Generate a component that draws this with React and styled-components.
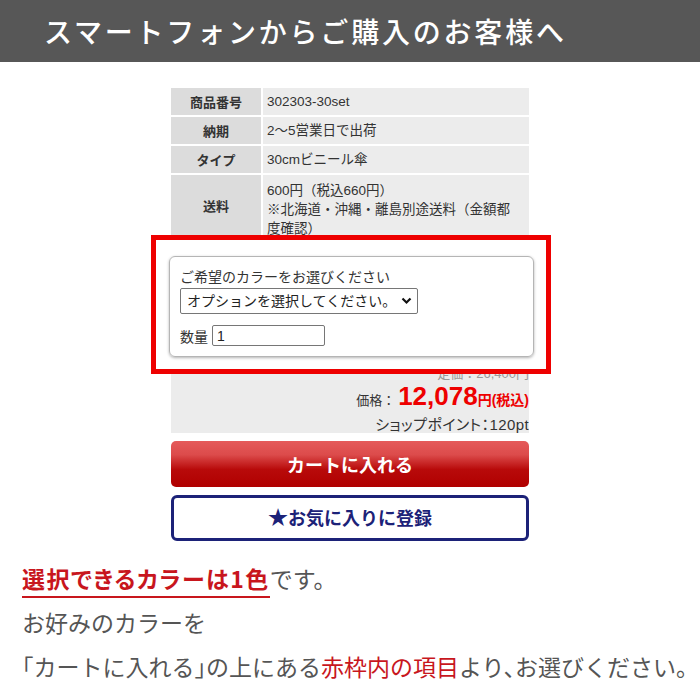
import React from "react"
import styled, { createGlobalStyle } from "styled-components"

const GlobalStyle = createGlobalStyle`
  body {
    margin: 0;
    background: #fff;
    font-family: "Liberation Sans", "Noto Sans CJK JP", sans-serif;
    color: #333;
  }
`

const Header = styled.header`
  height: 62px;
  background: #575757;
  display: flex;
  align-items: center;
  padding-left: 44px;
`

const Title = styled.h1`
  margin: 0;
  color: #fff;
  font-family: "Noto Sans CJK JP", sans-serif;
  font-weight: 500;
  font-size: 28px;
  letter-spacing: 2.8px;
`

const Main = styled.main`
  width: 358px;
  margin: 26px auto 0;
`

const Table = styled.div`
  display: grid;
  grid-template-columns: 90px 1fr;
  gap: 2px;
`

const Row = styled.div`
  display: contents;
`

const Label = styled.div`
  background: #dcdcdc;
  font-weight: bold;
  font-size: 13px;
  display: flex;
  align-items: center;
  justify-content: center;
  height: ${(p) => p.$h || 27}px;
`

const Value = styled.div`
  background: #ececec;
  font-size: 13.5px;
  line-height: 19px;
  padding: 0 16px 0 4px;
  display: flex;
  align-items: ${(p) => (p.$multi ? "flex-start" : "center")};
  height: ${(p) => p.$h || 27}px;
  box-sizing: border-box;
  overflow: hidden;
  padding-top: ${(p) => (p.$multi ? 6 : 0)}px;
`

const RedFrame = styled.div`
  margin: 0 -22px 0 -20px;
  border: 5px solid #ee0000;
  background: #fff;
  padding: 16px 12px 12px 13px;
`

const OptionCard = styled.div`
  border: 1px solid #b5b5b5;
  border-radius: 6px;
  box-shadow: 0 1px 3px rgba(0, 0, 0, 0.3);
  padding: 10px 10px;
  font-size: 14px;
  color: #333;
`

const CardLabel = styled.div`
  line-height: 20px;
`

const SelectWrap = styled.div`
  position: relative;
  width: 238px;
  margin-top: 1px;
`

const Select = styled.select`
  appearance: none;
  width: 238px;
  height: 26px;
  border: 1px solid #767676;
  border-radius: 2px;
  background: #fff;
  font-family: "Liberation Sans", "Noto Sans CJK JP", sans-serif;
  font-size: 14px;
  color: #222;
  padding: 0 0 0 6px;
`

const Chevron = styled.svg`
  position: absolute;
  right: 6px;
  top: 9px;
  pointer-events: none;
`

const QtyRow = styled.div`
  display: flex;
  align-items: center;
  gap: 4px;
  margin-top: 11px;
`

const QtyInput = styled.input`
  width: 113px;
  height: 21px;
  box-sizing: border-box;
  border: 1px solid #767676;
  border-radius: 2px;
  font-family: "Liberation Sans", sans-serif;
  font-size: 14px;
  padding: 0 4px;
  color: #222;
`

const PriceBox = styled.div`
  height: 59px;
  background: #ececec;
  overflow: hidden;
  display: flex;
  flex-direction: column;
  align-items: flex-end;
`

const ListPrice = styled.div`
  font-size: 13px;
  line-height: 16px;
  color: #999;
  margin-top: -8px;
  text-decoration: line-through;
`

const PriceLine = styled.div`
  display: flex;
  align-items: baseline;
  line-height: 28px;
  font-size: 13px;
`

const PriceNum = styled.span`
  color: #ee0000;
  font-weight: bold;
  font-size: 26px;
  margin-left: 3px;
`

const PriceUnit = styled.span`
  color: #ee0000;
  font-weight: bold;
  font-size: 14px;
`

const Points = styled.div`
  font-size: 15px;
  line-height: 20px;
  font-feature-settings: "palt";
  letter-spacing: 0.4px;
`

const Button = styled.button`
  display: flex;
  align-items: center;
  justify-content: center;
  width: 100%;
  height: 46px;
  margin-top: 8px;
  border-radius: 5px;
  font-family: "Noto Sans CJK JP", sans-serif;
  font-weight: bold;
  font-size: 18px;
  cursor: pointer;
  box-sizing: border-box;
`

const CartButton = styled(Button)`
  border: none;
  color: #fff;
  background: linear-gradient(to bottom, #e55a5a 0%, #dc4b4b 30%, #b80a0a 62%, #b00000 100%);
`

const FavButton = styled(Button)`
  border: 3px solid #1c2278;
  background: #fff;
  color: #1c2278;
  border-radius: 6px;
  padding-bottom: 4px;
`

const Star = styled.span`
  font-size: 20px;
`

const Notes = styled.section`
  margin-top: 15px;
  padding-left: 22px;
  font-family: "Noto Sans CJK JP", sans-serif;
  font-size: 23px;
  line-height: 44px;
  color: #555;
  white-space: nowrap;
`

const NoteLine = styled.div`
  font-feature-settings: ${(p) => (p.$half ? '"halt"' : "normal")};
`

const Strong = styled.span`
  color: #c8161d;
  font-weight: bold;
  border-bottom: 2px solid #c8161d;
  padding-bottom: 1px;
  font-feature-settings: "palt";
  letter-spacing: 1.5px;
`

const RedText = styled.span`
  color: #c8161d;
`

const specs = [
  { label: "商品番号", value: "302303-30set" },
  { label: "納期", value: "2～5営業日で出荷" },
  { label: "タイプ", value: "30cmビニール傘" },
]

export default function App() {
  return (
    <>
      <GlobalStyle />
      <Header>
        <Title>スマートフォンからご購入のお客様へ</Title>
      </Header>
      <Main>
        <Table>
          {specs.map((s) => (
            <Row key={s.label}>
              <Label>{s.label}</Label>
              <Value>{s.value}</Value>
            </Row>
          ))}
          <Row>
            <Label $h={60}>送料</Label>
            <Value $h={60} $multi>
              600円（税込660円）
              <br />
              ※北海道・沖縄・離島別途送料（金額都度確認）
            </Value>
          </Row>
        </Table>
        <RedFrame>
          <OptionCard>
            <CardLabel>ご希望のカラーをお選びください</CardLabel>
            <SelectWrap>
              <Select defaultValue="">
                <option value="">オプションを選択してください。</option>
              </Select>
              <Chevron width="11" height="8" viewBox="0 0 11 8">
                <path d="M1.5 1.5 L5.5 5.5 L9.5 1.5" fill="none" stroke="#111" strokeWidth="2.2" />
              </Chevron>
            </SelectWrap>
            <QtyRow>
              数量
              <QtyInput defaultValue="1" />
            </QtyRow>
          </OptionCard>
        </RedFrame>
        <PriceBox>
          <ListPrice>定価：26,400円</ListPrice>
          <PriceLine>
            価格：<PriceNum>12,078</PriceNum>
            <PriceUnit>円(税込)</PriceUnit>
          </PriceLine>
          <Points>ショップポイント：120pt</Points>
        </PriceBox>
        <CartButton>カートに入れる</CartButton>
        <FavButton>
          <Star>★</Star>お気に入りに登録
        </FavButton>
      </Main>
      <Notes>
        <NoteLine $half>
          <Strong>選択できるカラーは1色</Strong>です。
        </NoteLine>
        <NoteLine>お好みのカラーを</NoteLine>
        <NoteLine $half>
          「カートに入れる」の上にある<RedText>赤枠内の項目</RedText>より、お選びください。
        </NoteLine>
      </Notes>
    </>
  )
}
